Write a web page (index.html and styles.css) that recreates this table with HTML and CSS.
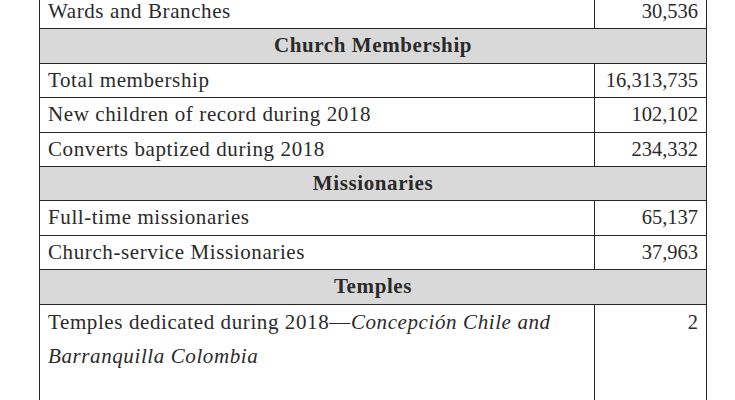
FILE: index.html
```
<!DOCTYPE html>
<html>
<head>
<meta charset="utf-8">
<link rel="stylesheet" href="styles.css">
</head>
<body>
<table class="stats">
  <colgroup><col class="c-label"><col class="c-num"></colgroup>
  <tr><td class="label">Wards and Branches</td><td class="num">30,536</td></tr>
  <tr class="section"><th colspan="2">Church Membership</th></tr>
  <tr><td class="label">Total membership</td><td class="num">16,313,735</td></tr>
  <tr><td class="label">New children of record during 2018</td><td class="num">102,102</td></tr>
  <tr><td class="label">Converts baptized during 2018</td><td class="num">234,332</td></tr>
  <tr class="section"><th colspan="2">Missionaries</th></tr>
  <tr><td class="label">Full-time missionaries</td><td class="num">65,137</td></tr>
  <tr><td class="label">Church-service Missionaries</td><td class="num">37,963</td></tr>
  <tr class="section"><th colspan="2">Temples</th></tr>
  <tr class="tall"><td class="label">Temples dedicated during 2018—<em>Concepción Chile and Barranquilla Colombia</em></td><td class="num">2</td></tr>
</table>
</body>
</html>
```

FILE: styles.css
```
html, body {
  margin: 0;
  padding: 0;
  background: #ffffff;
}
html {
  height: 400px;
  overflow: hidden;
}
body {
  height: 400px;
  overflow: hidden;
  font-family: "Liberation Serif", "Times New Roman", serif;
  color: #2a2a2a;
}
.stats {
  margin: -6px 0 0 39px;
  width: 667px;
  border-collapse: collapse;
  table-layout: fixed;
  font-size: 21px;
  letter-spacing: 0.6px;
}
.c-label { width: 555px; }
.c-num { width: 112px; }
.stats td, .stats th {
  border: 1px solid #262626;
  height: 34.4px;
  padding: 0 8px;
  line-height: 33.4px;
  box-sizing: border-box;
  vertical-align: middle;
}
.label { text-align: left; }
.num {
  text-align: right;
  font-size: 20.5px;
  letter-spacing: 0;
}
.section th {
  background: #d9d9d9;
  font-weight: 700;
  text-align: center;
}
.tall td {
  height: 100px;
  vertical-align: top;
  line-height: 34px;
}
```
